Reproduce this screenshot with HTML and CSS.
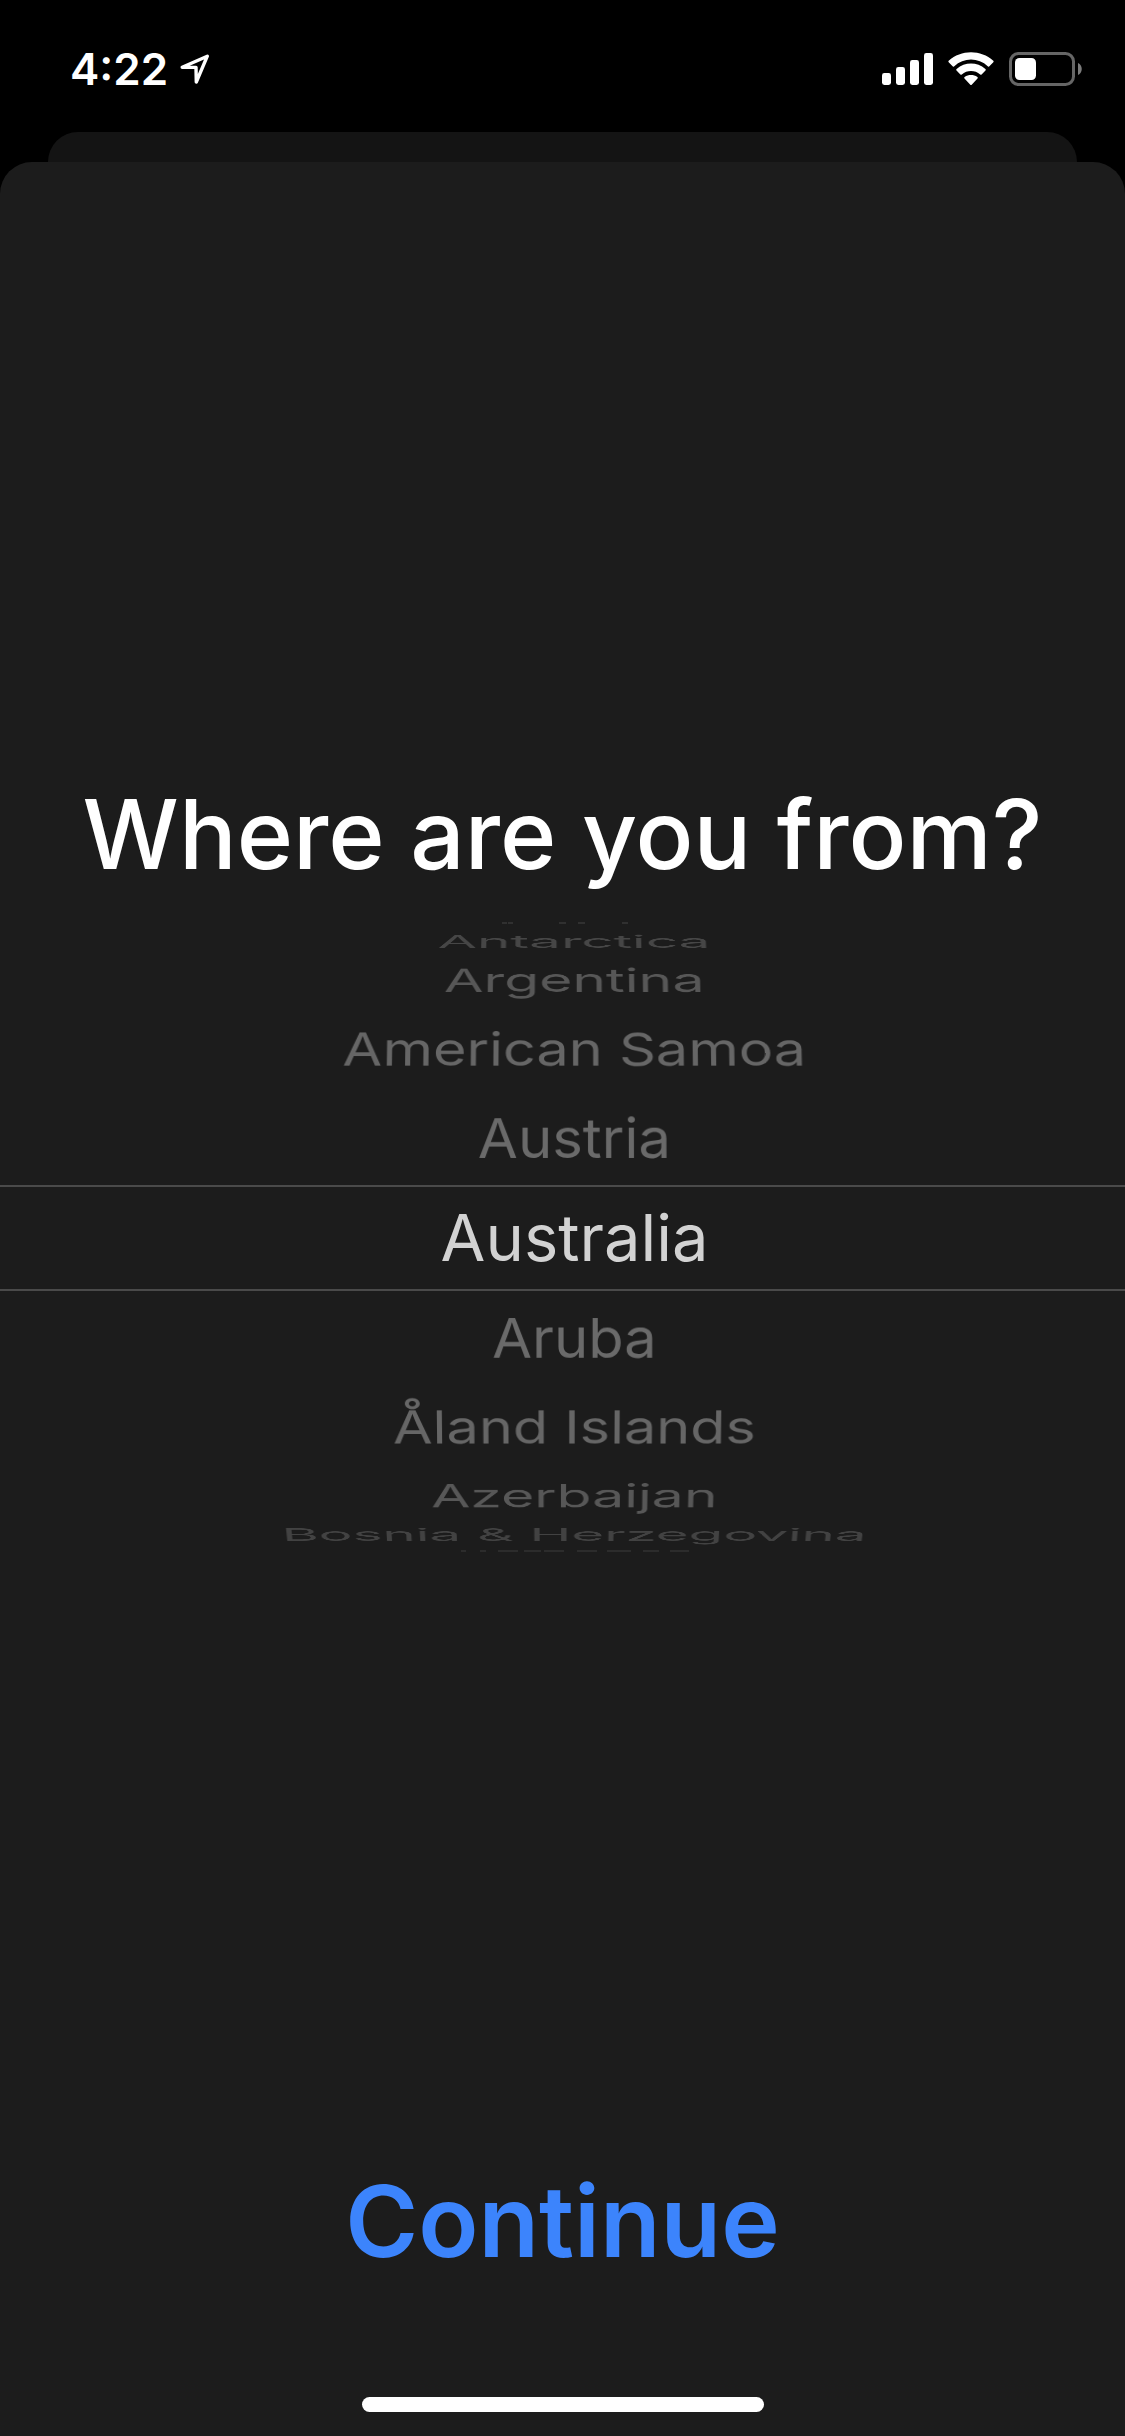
FILE: index.html
```html
<!DOCTYPE html>
<html lang="en">
<head>
<meta charset="utf-8">
<meta name="viewport" content="width=device-width, initial-scale=1">
<title>Where are you from?</title>
<link rel="stylesheet" href="styles.css">
</head>
<body>
<header class="status">
  <div class="status-group">
    <span class="time">4:22</span>
    <svg class="arrow" width="30" height="31" viewBox="0 0 30 31" fill="none" stroke="#fff" stroke-width="3.4" stroke-linejoin="round" aria-hidden="true"><path d="M2.2 13.2 27.3 2.2 16.3 28 16 13.4Z"/></svg>
  </div>
  <div class="status-group status-icons">
    <svg width="51" height="34" viewBox="0 0 51 34" fill="#fff" aria-hidden="true"><rect y="21" width="9" height="12" rx="2.4"/><rect x="14" y="15" width="9" height="18" rx="2.4"/><rect x="28" y="8" width="9" height="25" rx="2.4"/><rect x="42" y="1" width="9" height="32" rx="2.4"/></svg>
    <svg width="46" height="34" viewBox="0 0 46 34" fill="#fff" aria-hidden="true"><path d="M.7 10.200a1 1 0 0 1 0-1.400C13-2.700 33-2.700 45.300 8.800a1 1 0 0 1 0 1.400L41.400 14.300a1 1 0 0 1-1.400.1C30 5.300 16 5.300 6 14.400a1 1 0 0 1-1.400-.1Z"/><path d="M8.500 18.500a1 1 0 0 1 .1-1.500C17 9.700 29 9.700 37.400 17a1 1 0 0 1 .1 1.500L33.600 22.400a1 1 0 0 1-1.400 0C27 17.800 19 17.800 13.800 22.400a1 1 0 0 1-1.400 0Z"/><path d="M16.500 26.500a1 1 0 0 1 .1-1.500C20.500 22.400 25.500 22.400 29.400 25a1 1 0 0 1 .1 1.500L23.700 32.700a1 1 0 0 1-1.400 0Z"/></svg>
    <svg width="73" height="34" viewBox="0 0 73 34" aria-hidden="true"><rect x="1.500" y="1.500" width="63" height="31" rx="8" fill="none" stroke="#666" stroke-width="3"/><rect x="6" y="6" width="21" height="22" rx="4.500" fill="#fff"/><path d="M69 11v12c5-2 5-10 0-12Z" fill="#7c7c7c"/></svg>
  </div>
</header>
<div class="card-behind"></div>
<main class="sheet">
  <h1 class="title">Where are you from?</h1>
  <form class="form">
    <fieldset class="wheel" aria-label="Country">
      <svg class="edge edge-top" width="230" height="2" viewBox="0 0 230 2" stroke="#444" aria-hidden="true"><path d="M42 1h5M48 1h5M99 1h7M118 1h7M162 1h6"/></svg>
      <label class="row up-4"><input type="radio" name="country">Antarctica</label>
      <label class="row up-3"><input type="radio" name="country">Argentina</label>
      <label class="row up-2"><input type="radio" name="country">American Samoa</label>
      <label class="row up-1"><input type="radio" name="country">Austria</label>
      <label class="row selected"><input type="radio" name="country" checked>Australia</label>
      <label class="row down-1"><input type="radio" name="country">Aruba</label>
      <label class="row down-2"><input type="radio" name="country">Åland Islands</label>
      <label class="row down-3"><input type="radio" name="country">Azerbaijan</label>
      <label class="row down-4"><input type="radio" name="country">Bosnia &amp; Herzegovina</label>
      <svg class="edge edge-bottom" width="230" height="2" viewBox="0 0 230 2" stroke="#3c3c3c" aria-hidden="true"><path d="M1 1h5M20 1h6M38 1h20M64 1h17M84 1h20M117 1h20M147 1h24M183 1h16M210 1h19"/></svg>
    </fieldset>
    <button class="continue" type="button">Continue</button>
  </form>
  <div class="home-bar"></div>
</main>
</body>
</html>
```
FILE: styles.css
```css
* { box-sizing: border-box; }

body {
  margin: 0;
  min-height: 100vh;
  display: flex;
  flex-direction: column;
  background: #000;
  color: #fff;
  font-family: Inter, "Liberation Sans", sans-serif;
}

.status {
  display: flex;
  justify-content: space-between;
  height: 132px;
  padding: 6px 43px 0 70px;
}

.status-group {
  display: flex;
  align-items: center;
  gap: 12px;
}

.time {
  font-size: 44px;
  font-weight: 600;
}

.status-icons { gap: 15px; }

.card-behind {
  height: 30px;
  margin: 0 48px;
  border-radius: 30px 30px 0 0;
  background: #141414;
}

.sheet {
  flex: 1;
  display: flex;
  flex-direction: column;
  padding: 612px 0 24px;
  border-radius: 32px 32px 0 0;
  background: #1c1c1c;
}

.title {
  margin: 0 0 20px;
  font-size: 96px;
  line-height: 120px;
  font-weight: 500;
  text-align: center;
}

.form {
  flex: 1;
  display: flex;
  flex-direction: column;
}

/* Every row shares one grid cell and is turned around the drum's axis. */
.wheel {
  display: grid;
  grid-template-rows: 648px;
  align-items: center;
  margin: 0;
  padding: 0;
  border: 0;
  perspective: 8000px;
}

.row {
  grid-area: 1 / 1;
  padding-left: 24px;
  color: #6a6a6a;
  font-size: 58px;
  line-height: 102px;
  text-align: center;
  backface-visibility: hidden;
}

.row input {
  appearance: none;
  position: absolute;
  margin: 0;
}

.selected {
  border: solid #4a4a4a;
  border-width: 2px 0;
  color: #d2d2d2;
  font-size: 65px;
}

.up-1 { transform: translateZ(-324px) rotateX(18deg) translateZ(324px); }
.up-2 { transform: translateZ(-324px) rotateX(36deg) translateZ(324px); color: #666; }
.up-3 { transform: translateZ(-324px) rotateX(54deg) translateZ(324px); color: #575757; }
.up-4 { transform: translateZ(-324px) rotateX(70deg) translateZ(324px); color: #464646; }
.down-1 { transform: translateZ(-324px) rotateX(-18deg) translateZ(324px); }
.down-2 { transform: translateZ(-324px) rotateX(-36deg) translateZ(324px); color: #666; }
.down-3 { transform: translateZ(-324px) rotateX(-54deg) translateZ(324px); color: #575757; }
.down-4 { transform: translateZ(-324px) rotateX(-70deg) translateZ(324px); color: #424242; }

.edge {
  grid-area: 1 / 1;
  justify-self: center;
  margin: 8px 0 10px 24px;
}

.edge-top { align-self: start; }
.edge-bottom { align-self: end; }

.continue {
  align-self: center;
  margin: auto 0 116px;
  padding: 0;
  border: 0;
  background: none;
  color: #3c84fc;
  font: 600 99px/120px Inter, "Liberation Sans", sans-serif;
}

.home-bar {
  align-self: center;
  width: 402px;
  height: 15px;
  border-radius: 8px;
  background: #fff;
}
```
